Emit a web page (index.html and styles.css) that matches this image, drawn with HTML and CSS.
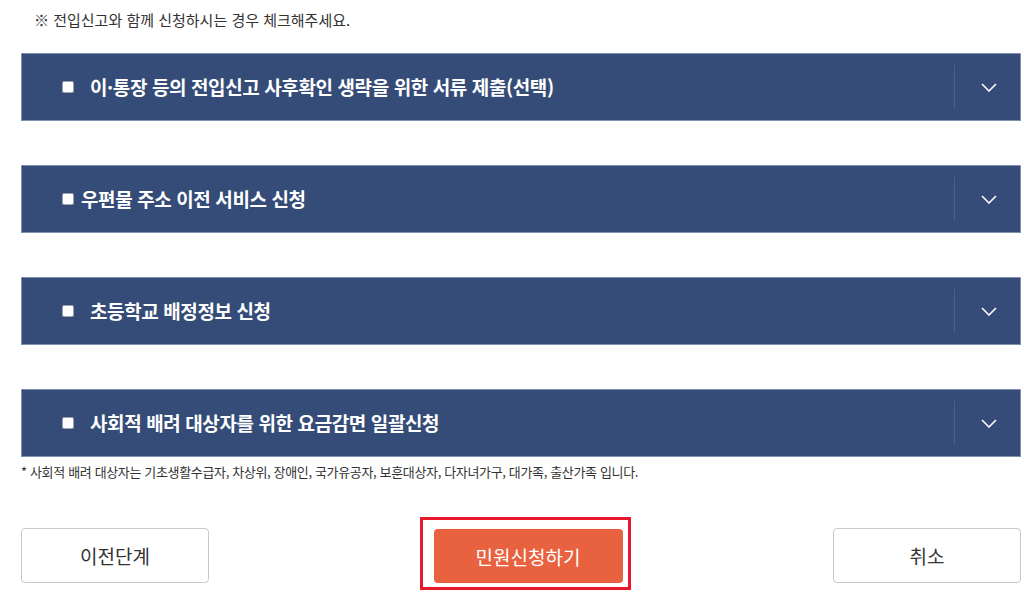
FILE: index.html
```html
<!DOCTYPE html>
<html lang="ko">
<head>
  <meta charset="UTF-8">
  <meta name="viewport" content="width=device-width, initial-scale=1.0">
  <title>민원신청</title>
  <link rel="stylesheet" href="styles.css">
</head>
<body>

  <div class="page">
    <p class="notice">※ 전입신고와 함께 신청하시는 경우 체크해주세요.</p>

    <div class="apply-list">
      <div class="apply-item">
        <label class="apply-label">
          <input type="checkbox" class="apply-check">
          <span class="apply-title">이·통장 등의 전입신고 사후확인 생략을 위한 서류 제출(선택)</span>
        </label>
        <button class="apply-toggle" type="button" aria-label="펼치기">
          <svg width="16" height="9" viewBox="0 0 16 9"><path d="M1 1l7 7 7-7" fill="none" stroke="#fff" stroke-width="1.6"/></svg>
        </button>
      </div>

      <div class="apply-item">
        <label class="apply-label tight">
          <input type="checkbox" class="apply-check">
          <span class="apply-title">우편물 주소 이전 서비스 신청</span>
        </label>
        <button class="apply-toggle" type="button" aria-label="펼치기">
          <svg width="16" height="9" viewBox="0 0 16 9"><path d="M1 1l7 7 7-7" fill="none" stroke="#fff" stroke-width="1.6"/></svg>
        </button>
      </div>

      <div class="apply-item">
        <label class="apply-label">
          <input type="checkbox" class="apply-check">
          <span class="apply-title">초등학교 배정정보 신청</span>
        </label>
        <button class="apply-toggle" type="button" aria-label="펼치기">
          <svg width="16" height="9" viewBox="0 0 16 9"><path d="M1 1l7 7 7-7" fill="none" stroke="#fff" stroke-width="1.6"/></svg>
        </button>
      </div>

      <div class="apply-item">
        <label class="apply-label">
          <input type="checkbox" class="apply-check">
          <span class="apply-title">사회적 배려 대상자를 위한 요금감면 일괄신청</span>
        </label>
        <button class="apply-toggle" type="button" aria-label="펼치기">
          <svg width="16" height="9" viewBox="0 0 16 9"><path d="M1 1l7 7 7-7" fill="none" stroke="#fff" stroke-width="1.6"/></svg>
        </button>
      </div>
    </div>

    <p class="footnote">* 사회적 배려 대상자는 기초생활수급자, 차상위, 장애인, 국가유공자, 보훈대상자, 다자녀가구, 대가족, 출산가족 입니다.</p>

    <div class="button-row">
      <a href="#" class="btn btn-line">이전단계</a>
      <div class="btn-focus">
        <a href="#" class="btn btn-primary">민원신청하기</a>
      </div>
      <a href="#" class="btn btn-line">취소</a>
    </div>
  </div>

</body>
</html>
```

FILE: styles.css
```css
:root {
  --navy: #344c77;
  --navy-border: #7d8fae;
  --orange: #e9623f;
  --red-line: #e8172b;
  --text: #333333;
  --line: #c9c9c9;
  --white: #ffffff;
}

body {
  margin: 0;
  padding: 0;
  font-family: 'Noto Sans CJK KR', 'Noto Sans', sans-serif;
  color: var(--text);
  background: var(--white);
}

.page {
  width: 1000px;
  padding: 0 0 0 21px;
}

.notice {
  margin: 0;
  padding: 10px 0 0 13px;
  font-size: 15px;
  line-height: 20px;
}

/* 신청 항목 패널 */
.apply-list {
  margin-top: 23px;
  display: flex;
  flex-direction: column;
  gap: 44px;
}

.apply-item {
  display: flex;
  align-items: center;
  height: 68px;
  box-sizing: border-box;
  background-color: var(--navy);
  border: 1px solid var(--navy-border);
}

.apply-label {
  flex: 1;
  display: flex;
  align-items: center;
  gap: 16px;
  padding-left: 40px;
  cursor: pointer;
}

.apply-label.tight {
  gap: 7px;
}

.apply-check {
  appearance: none;
  -webkit-appearance: none;
  margin: 0;
  width: 12px;
  height: 12px;
  background: var(--white);
  border: 1px solid #9aa3b3;
  border-radius: 2px;
  box-sizing: border-box;
}

.apply-title {
  color: var(--white);
  font-size: 19px;
  font-weight: 700;
  letter-spacing: -0.4px;
  line-height: 26px;
}

.apply-toggle {
  width: 66px;
  height: 44px;
  display: flex;
  align-items: center;
  justify-content: center;
  background: none;
  border: none;
  border-left: 1px solid rgba(255, 255, 255, 0.12);
  padding: 0 0 0 2px;
  cursor: pointer;
}

.footnote {
  margin: 6px 0 0 0;
  font-size: 13px;
  line-height: 17px;
  letter-spacing: -0.35px;
}

/* 하단 버튼 */
.button-row {
  display: flex;
  justify-content: space-between;
  align-items: flex-start;
  margin-top: 37px;
}

.btn {
  display: flex;
  align-items: center;
  justify-content: center;
  width: 188px;
  height: 55px;
  box-sizing: border-box;
  border-radius: 4px;
  font-size: 19px;
  text-decoration: none;
}

.btn-line {
  margin-top: 11px;
  border: 1px solid var(--line);
  color: var(--text);
  background: var(--white);
}

.btn-focus {
  margin-left: 8px;
  border: 3px solid var(--red-line);
  padding: 9px 5px 4px 11px;
}

.btn-primary {
  width: 189px;
  height: 54px;
  background: var(--orange);
  color: var(--white);
}
```
